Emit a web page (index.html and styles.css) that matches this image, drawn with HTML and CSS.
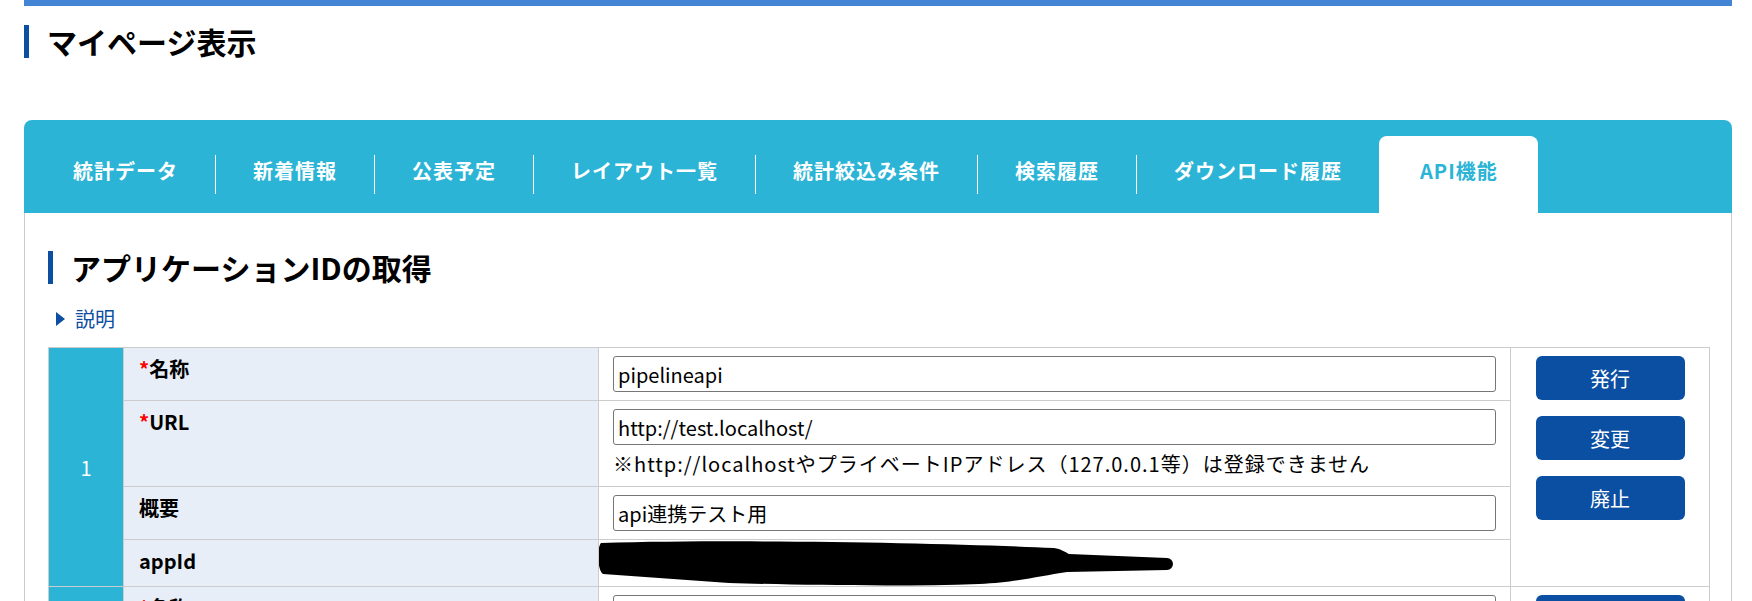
FILE: index.html
```html
<!DOCTYPE html>
<html lang="ja">
<head>
<meta charset="utf-8">
<title>マイページ表示</title>
<link rel="stylesheet" href="styles.css">
</head>
<body>
<div class="page">
  <div class="topbar"></div>
  <h1 class="page-title">マイページ表示</h1>
  <div class="panel">
    <nav class="tabs">
      <a class="tab">統計データ</a><span class="sep"></span>
      <a class="tab">新着情報</a><span class="sep"></span>
      <a class="tab">公表予定</a><span class="sep"></span>
      <a class="tab">レイアウト一覧</a><span class="sep"></span>
      <a class="tab">統計絞込み条件</a><span class="sep"></span>
      <a class="tab">検索履歴</a><span class="sep"></span>
      <a class="tab">ダウンロード履歴</a>
      <a class="tab active">API機能</a>
    </nav>
    <div class="panel-body">
      <h2 class="section-title">アプリケーションIDの取得</h2>
      <div class="toggle"><span class="tri"></span><span>説明</span></div>
      <table class="apps">
        <colgroup>
          <col class="c-num"><col class="c-label"><col class="c-value"><col class="c-act">
        </colgroup>
        <tbody>
          <tr>
            <td class="num" rowspan="4">1</td>
            <td class="label"><span class="req">*</span>名称</td>
            <td class="value"><input type="text" value="pipelineapi"></td>
            <td class="actions" rowspan="4">
              <div class="btns">
                <button class="btn">発行</button>
                <button class="btn">変更</button>
                <button class="btn">廃止</button>
              </div>
            </td>
          </tr>
          <tr>
            <td class="label"><span class="req">*</span>URL</td>
            <td class="value">
              <input type="text" value="http://test.localhost/">
              <div class="note">※http://localhostやプライベートIPアドレス（127.0.0.1等）は登録できません</div>
            </td>
          </tr>
          <tr>
            <td class="label">概要</td>
            <td class="value"><input type="text" value="api連携テスト用"></td>
          </tr>
          <tr>
            <td class="label">appId</td>
            <td class="value redacted">
              <svg class="scribble" width="590" height="46" viewBox="0 0 590 46">
                <path d="M2 3 C 150 -1, 350 3, 455 8 C 462 9, 466 12, 470 14 L 568 18 A 6 6 0 0 1 568 30 L 468 32 C 440 36, 420 42, 380 44 C 300 47, 200 45, 130 43 L 4 34 C -2 30, -2 7, 2 3 Z" fill="#000"/>
              </svg>
            </td>
          </tr>
          <tr>
            <td class="num" rowspan="4">2</td>
            <td class="label"><span class="req">*</span>名称</td>
            <td class="value"><input type="text" value=""></td>
            <td class="actions" rowspan="4">
              <div class="btns">
                <button class="btn">発行</button>
                <button class="btn">変更</button>
                <button class="btn">廃止</button>
              </div>
            </td>
          </tr>
          <tr>
            <td class="label"><span class="req">*</span>URL</td>
            <td class="value"><input type="text" value=""></td>
          </tr>
          <tr>
            <td class="label">概要</td>
            <td class="value"><input type="text" value=""></td>
          </tr>
          <tr>
            <td class="label">appId</td>
            <td class="value"></td>
          </tr>
        </tbody>
      </table>
    </div>
  </div>
</div>
</body>
</html>
```

FILE: styles.css
```css
html, body {
  margin: 0;
  padding: 0;
  background: #fff;
  overflow: hidden;
}
body {
  font-family: "Noto Sans CJK JP", "Noto Sans", sans-serif;
  color: #000;
}
.page {
  margin-left: 24px;
  width: 1708px;
}
.topbar {
  height: 6px;
  background: #4384d4;
}
.page-title {
  margin: 19px 0 62px;
  border-left: 5px solid #0b4ea2;
  padding-left: 18px;
  font-size: 30px;
  line-height: 33px;
  font-weight: 700;
}
.tabs {
  display: flex;
  align-items: flex-start;
  background: #2cb4d6;
  border-radius: 8px 8px 0 0;
  padding: 16px 0 0 12px;
  height: 93px;
  box-sizing: border-box;
}
.tab {
  height: 77px;
  box-sizing: border-box;
  padding: 20px 37px 0;
  font-size: 20px;
  line-height: 30px;
  font-weight: 700;
  color: #fff;
  letter-spacing: 1px;
  white-space: nowrap;
}
.tab.active {
  background: #fff;
  color: #2cb4d6;
  border-radius: 8px 8px 0 0;
  padding: 20px 40px 0 41px;
}
.sep {
  width: 1px;
  height: 39px;
  margin-top: 19px;
  background: #fff;
}
.panel-body {
  border-left: 1px solid #ccc;
  border-right: 1px solid #ccc;
  padding: 38px 22px 0 23px;
}
.section-title {
  margin: 0;
  border-left: 5px solid #0b4ea2;
  padding-left: 18px;
  font-size: 30px;
  line-height: 33px;
  font-weight: 700;
}
.toggle {
  display: flex;
  align-items: center;
  gap: 10px;
  margin: 20px 0 13px 8px;
  font-size: 20px;
  line-height: 30px;
  color: #0b4ea2;
}
.tri {
  width: 0;
  height: 0;
  border-left: 9px solid #0b4ea2;
  border-top: 7px solid transparent;
  border-bottom: 7px solid transparent;
}
.apps {
  width: 1661px;
  table-layout: fixed;
  border-collapse: collapse;
}
.c-num { width: 75px; }
.c-label { width: 475px; }
.c-value { width: 912px; }
.c-act { width: 199px; }
.apps td {
  border: 1px solid #ccc;
  font-size: 20px;
}
.num {
  background: #2cb4d6;
  color: #fff;
  text-align: center;
  vertical-align: middle;
  padding: 0;
}
.label {
  background: #e8eef7;
  font-weight: 700;
  vertical-align: top;
  padding: 7px 15px;
  line-height: 28px;
}
.req {
  color: #f00;
}
.value {
  vertical-align: top;
  padding: 8px 14px 8px;
  background: #fff;
}
.value input {
  display: block;
  width: 100%;
  box-sizing: border-box;
  height: 36px;
  margin: 0;
  border: 1px solid #767676;
  border-radius: 3px;
  padding: 0 4px;
  font-family: "Noto Sans CJK JP", "Noto Sans", sans-serif;
  font-size: 20px;
  color: #000;
  background: #fff;
}
.note {
  margin-top: 4px;
  line-height: 29px;
  letter-spacing: 1px;
  white-space: nowrap;
}
.value.redacted {
  padding: 0;
  height: 46px;
}
.scribble {
  display: block;
}
.actions {
  vertical-align: top;
  padding: 8px 0 0;
  background: #fff;
}
.btns {
  display: flex;
  flex-direction: column;
  align-items: center;
  gap: 16px;
}
.btn {
  width: 149px;
  height: 44px;
  border: none;
  border-radius: 6px;
  background: #0b4fa3;
  color: #fff;
  font-family: "Noto Sans CJK JP", "Noto Sans", sans-serif;
  font-size: 20px;
  padding: 0;
}
```
